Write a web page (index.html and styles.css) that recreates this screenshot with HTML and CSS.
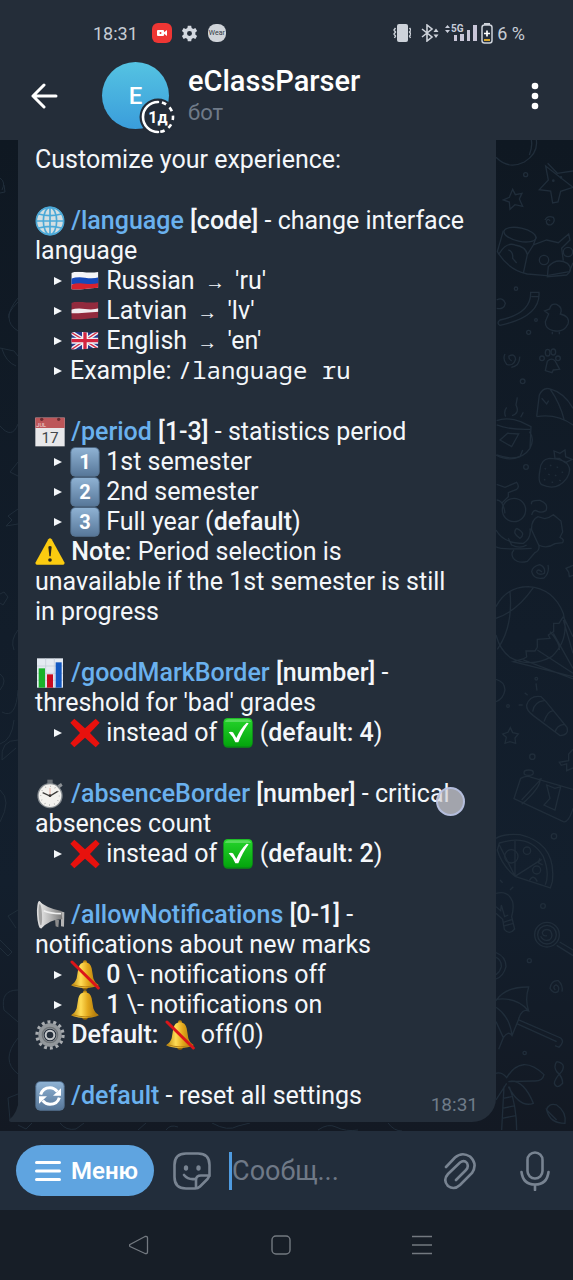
FILE: index.html
```html
<!DOCTYPE html>
<html lang="ru">
<head>
<meta charset="utf-8">
<meta name="viewport" content="width=device-width, initial-scale=1">
<title>eClassParser</title>
<link rel="stylesheet" href="styles.css">
</head>
<body>
<svg class="sprite" aria-hidden="true">
  <defs>
    <linearGradient id="gold" x1="0" x2="1"><stop offset="0" stop-color="#b98309"/><stop offset=".35" stop-color="#ffdc55"/><stop offset=".6" stop-color="#e3a81c"/><stop offset="1" stop-color="#a06c06"/></linearGradient>
    <linearGradient id="key" x1="0" y1="0" x2="0" y2="1"><stop offset="0" stop-color="#8fb2d3"/><stop offset="1" stop-color="#59799b"/></linearGradient>
    <linearGradient id="green" x1="0" y1="0" x2="0" y2="1"><stop offset="0" stop-color="#25d42b"/><stop offset="1" stop-color="#04a50d"/></linearGradient>
    <linearGradient id="steel" x1="0" x2="1"><stop offset="0" stop-color="#e9e9e9"/><stop offset=".5" stop-color="#b5b5b5"/><stop offset="1" stop-color="#777"/></linearGradient>
    <clipPath id="flag"><path d="M4 21Q16 15 38 18T85 18V65Q64 66 44 69T4 70Z"/></clipPath>
  </defs>
  <symbol id="globe" viewBox="0 0 90 90"><circle cx="45" cy="45" r="42" fill="#d4dfe2"/><g fill="none" stroke="#4ba9d8" stroke-width="5"><circle cx="45" cy="45" r="41"/><ellipse cx="45" cy="45" rx="20" ry="41"/><path d="M45 4V86M4 45H86M11 24Q45 34 79 24M11 66Q45 56 79 66"/></g></symbol>
  <symbol id="ru" viewBox="0 0 90 90"><g clip-path="url(#flag)"><path d="M0 10H90V80H0Z" fill="#f4f5f8"/><path d="M0 39Q20 31 45 35T90 33V55H0Z" fill="#1649b8"/><path d="M0 57Q20 50 45 53T90 50V80H0Z" fill="#d6222d"/></g></symbol>
  <symbol id="lv" viewBox="0 0 90 90"><g clip-path="url(#flag)"><path d="M0 10H90V80H0Z" fill="#922a3d"/><path d="M0 42Q20 35 45 39T90 36V47Q65 48 45 50T0 52Z" fill="#f1edf0"/></g></symbol>
  <symbol id="gb" viewBox="0 0 90 90"><g clip-path="url(#flag)"><path d="M0 10H90V80H0Z" fill="#28398c"/><path d="M2 18L87 70M87 15L2 72" stroke="#f0f1f6" stroke-width="12"/><path d="M2 18L87 70M87 15L2 72" stroke="#d42a42" stroke-width="4"/><path d="M45 12V76M0 44H90" stroke="#f0f1f6" stroke-width="18"/><path d="M45 12V76M0 44H90" stroke="#d42440" stroke-width="10"/></g></symbol>
  <symbol id="calendar" viewBox="0 0 90 90"><path d="M1 2H89V88H1Z" fill="#e8e8ea"/><path d="M1 2H89V33H1Z" fill="#bd5659"/><circle cx="20" cy="7" r="5" fill="#6b2c31"/><circle cx="71" cy="7" r="5" fill="#6b2c31"/></symbol>
  <symbol id="keycap" viewBox="0 0 90 90"><rect x="1" y="1" width="88" height="88" rx="15" fill="#587797"/><rect x="4" y="3" width="82" height="81" rx="13" fill="url(#key)"/></symbol>
  <symbol id="warning" viewBox="0 0 90 90"><path d="M40 7Q45 1 50 7L88 76Q90 83 84 83H6Q0 83 2 76Z" fill="#fbcb10"/><path d="M40 29Q45 25 50 29L47 58H43Z" fill="#292620"/><circle cx="45" cy="69" r="5.500" fill="#292620"/></symbol>
  <symbol id="chart" viewBox="0 0 90 90"><path d="M6 1H84V89H6Z" fill="#e4eaf2"/><path d="M6 24H84M6 46H84M6 67H84M32 1V89M58 1V89" stroke="#bfc9d6" stroke-width="2"/><path d="M11 31H30V89H11Z" fill="#19b22a"/><path d="M36 49H54V89H36Z" fill="#c80b20"/><path d="M62 13H80V89H62Z" fill="#1258c1"/></symbol>
  <symbol id="cross" viewBox="0 0 90 90"><path d="M13 2L45 31 77 2 89 14 60 45 89 76 77 88 45 59 13 88 1 76 30 45 1 14Z" fill="#e8110d"/></symbol>
  <symbol id="check" viewBox="0 0 90 90"><rect x="1" y="1" width="88" height="88" rx="13" fill="#088f14"/><rect x="2" y="1" width="86" height="83" rx="12" fill="url(#green)"/><path d="M6 12Q8 4 18 4H72Q82 4 84 12Z" fill="#79e57b" opacity=".6"/><path d="M17 43Q24 39 30 43L40 60Q52 32 71 14L77 16Q59 40 46 73H37Q29 54 17 43Z" fill="#fff"/></symbol>
  <symbol id="stopwatch" viewBox="0 0 90 90"><path d="M37 2H53V15H37Z" fill="#697077"/><path d="M68 19L78 12 83 20 73 28Z" fill="#8d9297"/><circle cx="45" cy="50" r="38" fill="#858b90"/><circle cx="45" cy="50" r="34" fill="#f3f2ef"/><circle cx="45" cy="50" r="28" fill="none" stroke="#9a9a98" stroke-width="4" stroke-dasharray="2 12.600"/><path d="M23 41L45 51 68 37" fill="none" stroke="#3b3a39" stroke-width="4"/><path d="M45 27V50" stroke="#d98a79" stroke-width="2"/><circle cx="45" cy="50" r="4" fill="#333"/></symbol>
  <symbol id="megaphone" viewBox="0 0 90 90"><path d="M60 57L62 79 70 82 72 61Z" fill="#8b8b8b"/><path d="M76 34L88 37 87 80 78 79V58Z" fill="#b5b5b5"/><path d="M13 4Q34 25 79 33L82 58Q47 57 18 86Z" fill="url(#steel)"/><ellipse cx="15" cy="44" rx="9" ry="41" fill="#dadada" transform="rotate(-3 15 44)"/><ellipse cx="16" cy="44" rx="5" ry="32" fill="#a2a2a2" transform="rotate(-3 16 44)"/><path d="M26 32Q45 40 78 41" fill="none" stroke="#efefef" stroke-width="5"/></symbol>
  <symbol id="bell" viewBox="0 0 90 90"><circle cx="45" cy="80" r="9" fill="#9b6908"/><circle cx="45" cy="7" r="6" fill="#c18a11"/><path d="M25 25Q29 7 45 7T65 25L70 55Q74 68 87 76 70 84 45 84T3 76Q16 68 20 55Z" fill="url(#gold)"/><path d="M8 74Q45 87 83 74" fill="none" stroke="#b98214" stroke-width="3"/></symbol>
  <symbol id="bell-off" viewBox="0 0 90 90"><use href="#bell"/><path d="M6 6L85 84" stroke="#dc1519" stroke-width="9" stroke-linecap="round"/></symbol>
  <symbol id="gear" viewBox="0 0 90 90"><circle cx="45" cy="45" r="39" fill="none" stroke="#a8acb0" stroke-width="10" stroke-dasharray="8.750 8.750"/><circle cx="45" cy="45" r="27" fill="none" stroke="#92979b" stroke-width="16"/><circle cx="45" cy="45" r="23" fill="none" stroke="#6f7478" stroke-width="4"/><circle cx="45" cy="45" r="13" fill="none" stroke="#c4c7ca" stroke-width="6"/></symbol>
  <symbol id="refresh" viewBox="0 0 90 90"><use href="#keycap"/><g fill="none" stroke="#fff" stroke-width="9"><path d="M17 41Q23 20 45 20 58 20 67 32M73 50Q67 70 45 70 32 70 23 59"/></g><path d="M78 22V44H54ZM12 68V46H36Z" fill="#fff"/></symbol>
</svg>

<div class="app">
  <header class="top">
    <div class="status">
      <div class="status-left">
        <span class="clock">18:31</span>
        <svg class="rec" viewBox="0 0 20 20"><rect width="20" height="20" rx="6" fill="#ee3634"/><rect x="5" y="7" width="7" height="6" rx="1" fill="#fff"/><path d="M11 10L15 7V13Z" fill="#fff"/><circle cx="8.500" cy="10" r="1" fill="#ee3634"/></svg>
        <svg class="cog" viewBox="0 0 24 24"><path fill="#d3d8e0" fill-rule="evenodd" d="M9.600 1H14.400L15 4.200A8 8 0 0 1 17.200 5.500L20.300 4.400 22.700 8.600 20.200 10.700A8 8 0 0 1 20.200 13.300L22.700 15.400 20.300 19.600 17.200 18.500A8 8 0 0 1 15 19.800L14.400 23H9.600L9 19.800A8 8 0 0 1 6.800 18.500L3.700 19.600 1.300 15.400 3.800 13.300A8 8 0 0 1 3.800 10.700L1.300 8.600 3.700 4.400 6.800 5.500A8 8 0 0 1 9 4.200ZM12 8.500A3.500 3.500 0 1 0 12 15.500 3.500 3.500 0 1 0 12 8.500Z"/></svg>
        <span class="wear">Wear</span>
      </div>
      <div class="status-right">
        <svg class="vibrate" viewBox="0 0 18 20"><rect x="4" y="1" width="11" height="18" rx="2" fill="#cdd2da"/><path d="M2.500 5L1 7 2.500 9 1 11 2.500 13 1.500 15M16.500 5L18 7 16.500 9 18 11 16.500 13 17.500 15" fill="none" stroke="#cdd2da" stroke-width="1.400"/></svg>
        <svg class="bluetooth" viewBox="0 0 18 18"><path d="M1 5L11 13 6 17V1L11 5 1 13" fill="none" stroke="#cdd2da" stroke-width="1.600"/><path d="M12.500 8L15 4.500 17.500 8ZM12.500 10.500H17.500L15 14Z" fill="#cdd2da"/></svg>
        <svg class="signal" viewBox="0 0 32 20"><path d="M0 5L2.500 2 5 5ZM0 7H5L2.500 10Z" fill="#c9cedb"/><text x="6" y="9" class="signal-label">5G</text><path d="M9 12H12V18H9ZM15 11H19V18H15ZM22 7H25V18H22ZM28 2H32V18H28Z" fill="#c9c6d8"/></svg>
        <svg class="battery" viewBox="0 0 12 22"><path d="M3 1H9V3H3Z" fill="#cdd2da"/><rect x="1" y="3" width="10" height="18" rx="2.500" fill="none" stroke="#cdd2da" stroke-width="1.500"/><path d="M6 8.500V14.500M3 11.500H9" stroke="#fff" stroke-width="1.700"/><path d="M3 17H9V19H3Z" fill="#d7a52c"/></svg>
        <span class="percent">6 %</span>
      </div>
    </div>
    <div class="chat-bar">
      <button class="icon-btn back" aria-label="Назад"><svg viewBox="0 0 28 26"><path d="M26 13H3M14 2L3 13 14 24" fill="none" stroke="#fff" stroke-width="3" stroke-linecap="round" stroke-linejoin="round"/></svg></button>
      <div class="avatar">E
        <svg class="timer" viewBox="0 0 38 38"><circle cx="19" cy="19" r="18.500" fill="#232c38"/><path d="M19 4A15 15 0 0 0 19 34" fill="none" stroke="#fff" stroke-width="2.600" stroke-linecap="round"/><path d="M19 4A15 15 0 0 1 19 34" fill="none" stroke="#fff" stroke-width="2.600" stroke-dasharray="0 4 4.500 4.500 4.500 4.500 4.500 4.500 4.500 4.500 4.500 9"/><text x="19" y="25" class="timer-label">1д</text></svg>
      </div>
      <div class="peer">
        <h1>eClassParser</h1>
        <p>бот</p>
      </div>
      <button class="icon-btn more" aria-label="Ещё"><svg viewBox="0 0 8 28"><g fill="#fff"><circle cx="4" cy="4" r="3.300"/><circle cx="4" cy="14" r="3.300"/><circle cx="4" cy="24" r="3.300"/></g></svg></button>
    </div>
  </header>

  <main class="chat">
    <svg class="doodles doodles-right" viewBox="0 0 77 991" aria-hidden="true">
      <g transform="translate(-56 -10) scale(.3333)">
        <path d="M168 82Q205 120 253 96 295 70 289 30M268 75Q278 50 274 30"/>
        <path d="M323 100L352 130 399 123M399 172L362 184 354 216 338 219 332 183 298 179 325 150 317 108Z"/><circle cx="340" cy="152" r="2"/><circle cx="363" cy="142" r="2"/><circle cx="257" cy="134" r="6"/>
        <path d="M218 178L226 194 246 190 238 207 248 229 225 224 210 238 208 216 190 210 208 202Z"/>
        <path d="M330 273Q324 263 319 274 320 287 334 284 348 274 340 262 322 255 315 270"/>
        <ellipse cx="240" cy="314" rx="49" ry="20" transform="rotate(12 240 314)"/>
        <path d="M190 302L172 365Q205 420 262 432L320 437 388 425 399 398M289 320L280 345 262 374 250 430M178 370Q200 335 225 345 258 350 262 374M205 360Q220 365 218 385L230 399M280 345L320 330 355 338 386 312 390 330 365 355 370 392"/><circle cx="312" cy="390" r="14"/><circle cx="384" cy="366" r="14"/><path d="M322 440L325 410Q350 382 382 400 402 420 380 435Z"/>
        <path d="M272 487H297Q302 560 180 586 168 580 180 570 274 550 272 487ZM274 500H296M170 510Q188 500 196 520 192 540 170 535"/><circle cx="228" cy="476" r="5"/><circle cx="266" cy="607" r="6"/><circle cx="288" cy="570" r="4"/>
        <path d="M326 552L314 543 329 537Q332 520 350 523 370 533 361 552 391 559 384 582 371 609 340 602 315 597 316 575 320 565 326 552ZM337 605V613M358 605V613"/>
        <path d="M215 693Q205 687 207 678 225 669 227 688 220 710 200 703 187 688 195 672M214 712Q240 708 239 680"/><circle cx="248" cy="754" r="7"/>
        <ellipse cx="323" cy="668" rx="7" ry="10"/><ellipse cx="340" cy="666" rx="7" ry="9"/><circle cx="306" cy="685" r="7"/><circle cx="354" cy="685" r="7"/><path d="M316 722L322 694Q334 682 345 692L359 718 340 720 336 728Z"/>
        <path d="M290 860L298 795Q310 770 330 777 372 788 399 835M290 860Q350 850 399 885M330 777Q360 820 373 871M305 805L320 822 326 812"/>
        <path d="M170 872Q200 860 242 875L273 890 270 955Q240 1000 170 975M170 885Q210 900 270 898M180 930L203 910 236 912 215 950ZM268 905Q285 925 270 955M197 860Q190 845 200 832M216 857Q240 850 228 825L232 802M242 862L250 847"/>
      </g>
      <g transform="translate(-56 310) scale(.3333)">
        <path d="M168 15Q205 35 240 20L248 0"/><circle cx="258" cy="51" r="7"/>
        <path d="M300 60Q302 28 328 25 350 25 375 35 400 55 380 85 350 125 305 104 293 95 300 60M345 25L342 3 360 10 375 0 377 20 397 28 376 38 358 25Z"/><path d="M314 55L318 58M330 45L334 48M350 50L354 53M365 65L369 68M345 75L349 78M325 72L329 75M312 88L316 91M335 95L339 98M358 90L362 93" />
        <path d="M170 103L195 112 230 97Q240 110 230 118L205 128V140L185 160M170 150Q190 150 195 190"/><circle cx="222" cy="180" r="35"/>
        <path d="M275 163Q270 150 300 151 326 160 318 182 305 190 293 184 280 176 275 195M275 240Q273 210 294 200L314 206Q330 202 340 194L363 213 368 246 360 262Q374 268 368 278L345 281Q320 298 296 285ZM296 285Q301 300 285 308L262 334Q235 342 220 325 211 310 222 300M168 240Q190 280 250 280 275 265 270 235M205 265L215 285Q240 298 260 285M230 235Q215 250 240 265 260 250 230 235M168 290Q180 300 275 295"/>
        <path d="M306 366Q292 354 290 366 295 377 313 370 318 352 299 344 277 350 275 365 281 390 312 384 329 370 324 345M399 346L390 350 378 355 386 366 388 380 399 376"/>
        <path d="M168 470Q200 410 265 410 340 415 370 490 390 570 335 620 270 655 210 622 180 600 168 555M210 425Q220 530 172 598M280 413Q230 485 168 505M370 500L357 520 341 520V545L325 555 330 565 292 568V592L285 603H258L260 621 249 627 220 635 399 680M330 545Q360 580 358 600M370 500L399 560M370 510L399 610M340 550L399 655M292 600L399 670M250 630L399 687"/>
        <path d="M168 688Q194 695 195 720 190 748 168 755M288 700L291 722M254 728L263 736M236 765H248"/><circle cx="289" cy="686" r="4"/><circle cx="204" cy="768" r="4"/>
        <path d="M260 765Q270 735 303 740L318 755 381 832Q388 855 360 857L280 797Q258 780 260 765ZM278 785Q282 755 313 752M312 815Q325 780 340 783M345 847Q350 825 373 823"/>
        <path d="M211 833L218 848 235 852 225 864 227 880 210 875 195 880 199 862 188 852 204 847ZM399 898L386 912 386 932 358 937 364 946 380 942V962L399 954"/><circle cx="277" cy="920" r="8"/>
      </g>
      <g transform="translate(-56 630) scale(.3333)">
        <path d="M242 25Q260 15 275 22L399 58M242 25L222 86 370 155Q385 160 399 115M245 90L305 25M300 25Q305 50 245 103M320 45L345 55 362 50 345 120 312 105 330 85Z"/><ellipse cx="266" cy="8" rx="14" ry="8"/><circle cx="342" cy="199" r="8"/><circle cx="309" cy="408" r="7"/><circle cx="268" cy="572" r="6"/><circle cx="254" cy="849" r="5"/>
        <path d="M168 205Q190 190 240 194 350 220 337 335L331 354 225 319Q185 285 172 240L178 219Q270 190 310 260 330 310 316 344M225 211V319M225 319L305 268M225 319L178 225"/><circle cx="214" cy="259" r="20"/><circle cx="261" cy="242" r="11"/><circle cx="290" cy="300" r="12"/><path d="M268 332Q280 310 292 335M300 265L295 278 308 285"/>
        <path d="M168 370Q205 360 218 395 222 415 215 440L224 477Q208 497 193 478L188 448 168 430M168 410L182 422 184 405 194 440 205 435M190 457L218 448M193 468L220 460M180 330L188 338M210 360L220 350"/>
        <circle cx="321" cy="494" r="37"/><circle cx="321" cy="494" r="28"/><path d="M321 497Q307 500 307 487 315 473 331 482 342 500 328 510 310 515 302 499M359 516L399 540M350 526L399 557"/>
        <path d="M168 548Q198 560 198 590 190 620 168 627M168 562Q185 570 184 590 180 606 168 614"/>
        <path d="M346 660Q336 650 348 645 361 650 354 665 340 673 330 655 334 630 355 632 370 645 366 665"/>
        <path d="M168 692Q195 650 266 651 254 690 266 723 245 714 235 750L216 797Q205 780 190 803L176 838M168 688Q230 680 266 723M168 712Q210 740 216 797M168 755L190 803M236 750L362 804Q375 815 357 832L345 827M232 762L350 815"/>
        <path d="M168 910Q185 905 200 923 245 850 312 914 308 935 280 933L205 935M205 935Q250 925 280 1000 240 1015 205 950M200 940L168 990M192 950L185 1080M208 950Q230 1010 230 1080M189 985L215 980M187 1015L222 1008M186 1045L228 1037"/><path d="M350 875Q380 880 365 905 345 925 343 940 350 960 368 940 368 920 350 905 340 890 350 875M320 1020Q325 998 350 1005 380 1025 375 1060 330 1060 320 1020L350 1050"/>
      </g>
    </svg>
    <svg class="doodles doodles-left" viewBox="0 0 18 991" aria-hidden="true">
      <path d="M0 38Q6 42 2 50M0 53L5 52 4 45M18 158Q0 180 18 191M18 162Q6 174 9 178M0 208L14 211 18 216M2 209Q6 222 16 226M0 286Q12 300 18 284M18 322L10 332 18 336M18 369L8 376 12 380 6 386 18 384M0 454L4 452 8 457 3 465 0 463M18 490Q10 500 14 510M0 534Q8 540 0 550M2 572Q16 580 18 550M14 580Q12 600 0 604M18 600Q0 600 2 620L16 608M0 650Q12 660 0 682M18 770L8 776 16 788M0 800L12 812 8 816 0 808M18 850Q0 850 4 870L18 882M18 898Q0 920 18 934M18 954L8 958 10 980"/>
    </svg>
    <svg class="doodles doodles-bottom" viewBox="0 0 478 8" aria-hidden="true"><path d="M0 2L8 6 14 0M42 0Q48 8 58 6L66 0M120 7L128 0M148 7Q152 1 160 4M194 0Q210 9 220 3L232 0M300 7Q310 0 318 4 328 9 340 7M370 0Q376 8 384 8"/></svg>

    <article class="bubble">
      <p>Customize your experience:</p>

      <section>
        <p><svg class="emoji"><use href="#globe"/></svg> <a href="#">/language</a> <b>[code]</b> - change interface language</p>
        <ul>
          <li><svg class="emoji"><use href="#ru"/></svg> Russian <span class="arrow">→</span> 'ru'</li>
          <li><svg class="emoji"><use href="#lv"/></svg> Latvian <span class="arrow">→</span> 'lv'</li>
          <li><svg class="emoji"><use href="#gb"/></svg> English <span class="arrow">→</span> 'en'</li>
          <li>Example: <code>/language ru</code></li>
        </ul>
      </section>

      <section>
        <p><svg class="emoji" viewBox="0 0 90 90"><use href="#calendar"/><text x="4" y="30" class="cal-month">JUL</text><text x="45" y="78" class="cal-day">17</text></svg> <a href="#">/period</a> <b>[1-3]</b> - statistics period</p>
        <ul>
          <li><svg class="emoji" viewBox="0 0 90 90"><use href="#keycap"/><text x="45" y="66" class="key-digit">1</text></svg> 1st semester</li>
          <li><svg class="emoji" viewBox="0 0 90 90"><use href="#keycap"/><text x="45" y="66" class="key-digit">2</text></svg> 2nd semester</li>
          <li><svg class="emoji" viewBox="0 0 90 90"><use href="#keycap"/><text x="45" y="66" class="key-digit">3</text></svg> Full year (<b>default</b>)</li>
        </ul>
        <p><svg class="emoji"><use href="#warning"/></svg> <b>Note:</b> Period selection is<br>unavailable if the 1st semester is still<br>in progress</p>
      </section>

      <section>
        <p><svg class="emoji"><use href="#chart"/></svg> <a href="#">/goodMarkBorder</a> <b>[number]</b> -<br>threshold for 'bad' grades</p>
        <ul>
          <li><svg class="emoji"><use href="#cross"/></svg> instead of <svg class="emoji"><use href="#check"/></svg> (<b>default: 4</b>)</li>
        </ul>
      </section>

      <section>
        <p><svg class="emoji"><use href="#stopwatch"/></svg> <a href="#">/absenceBorder</a> <b>[number]</b> - <span class="touched">critical<span class="touch"></span></span> absences count</p>
        <ul>
          <li><svg class="emoji"><use href="#cross"/></svg> instead of <svg class="emoji"><use href="#check"/></svg> (<b>default: 2</b>)</li>
        </ul>
      </section>

      <section>
        <p><svg class="emoji"><use href="#megaphone"/></svg> <a href="#">/allowNotifications</a> <b>[0-1]</b> -<br>notifications about new marks</p>
        <ul>
          <li><svg class="emoji"><use href="#bell-off"/></svg> <b>0</b> \- notifications off</li>
          <li><svg class="emoji"><use href="#bell"/></svg> <b>1</b> \- notifications on</li>
        </ul>
        <p><svg class="emoji"><use href="#gear"/></svg> <b>Default:</b> <svg class="emoji"><use href="#bell-off"/></svg> off(0)</p>
      </section>

      <div class="last">
        <p><svg class="emoji"><use href="#refresh"/></svg> <a href="#">/default</a> - reset all settings</p>
        <time>18:31</time>
      </div>
      <svg class="tail" viewBox="0 0 10 24" aria-hidden="true"><path d="M10 0Q9 15 0 22 0 24 2 24H10Z" fill="#242e3a"/></svg>
    </article>
  </main>

  <form class="composer">
    <button type="button" class="menu"><svg viewBox="0 0 26 20"><path d="M1.500 1.500H24.500M1.500 10H24.500M1.500 18.500H24.500" stroke="#fff" stroke-width="3" stroke-linecap="round"/></svg>Меню</button>
    <button type="button" class="icon-btn sticker" aria-label="Стикеры"><svg viewBox="0 0 38 38"><g fill="none" stroke="#788391" stroke-width="2.600" stroke-linecap="round" stroke-linejoin="round"><path d="M36.500 24V13Q36.500 1.500 25 1.500H13Q1.500 1.500 1.500 13V25Q1.500 36.500 13 36.500H22Q25 36.500 27 34.500L34.500 27Q36.500 25 36.500 22M23 36V28Q23 23.500 28 23.500H36"/><path d="M11 23Q15 28 22 27"/></g><ellipse cx="13" cy="16" rx="2.200" ry="2.800" fill="#788391"/><ellipse cx="25.500" cy="16" rx="2.200" ry="2.800" fill="#788391"/></svg></button>
    <input type="text" placeholder="Сообщ..." aria-label="Сообщение">
    <button type="button" class="icon-btn clip" aria-label="Прикрепить"><svg viewBox="0 0 34 38"><path d="M3 15L12 5.500Q19-.5 27 4.500 35 12 29 21L17 33Q11 38.500 5 34-.5 28 5 22L17 10.500Q21 7.500 24 11 26 15 23 18L13 28" fill="none" stroke="#788391" stroke-width="2.600" stroke-linecap="round"/></svg></button>
    <button type="button" class="icon-btn mic" aria-label="Голосовое сообщение"><svg viewBox="0 0 30 40"><g fill="none" stroke="#788391" stroke-width="2.600" stroke-linecap="round"><rect x="7.500" y="1.500" width="15" height="26" rx="7.500"/><path d="M1.500 21Q3 33.500 15 33.500T28.500 21M15 34V39"/></g></svg></button>
  </form>

  <nav class="system">
    <button class="icon-btn" aria-label="Назад"><svg viewBox="0 0 20 20"><path d="M1 9.500Q0 10.500 1 11.500L16 18.500Q18.500 19 18.500 17V3Q18.500 1 16 1.500Z" fill="none" stroke="#737980" stroke-width="1.300"/></svg></button>
    <button class="icon-btn" aria-label="Домой"><svg viewBox="0 0 20 20"><rect x="1" y="1" width="18" height="18" rx="4" fill="none" stroke="#737980" stroke-width="1.400"/></svg></button>
    <button class="icon-btn" aria-label="Недавние"><svg viewBox="0 0 20 20"><path d="M0 1.500H20M0 10H20M0 18.500H20" stroke="#737980" stroke-width="1.500"/></svg></button>
  </nav>
</div>
</body>
</html>
```

FILE: styles.css
```css
* { box-sizing: border-box; }
body {
  margin: 0;
  background: #171e27;
  color: #f4f7fa;
  font-family: Roboto, "Noto Sans", sans-serif;
}
p, h1, ul { margin: 0; padding: 0; }
svg { display: block; }
button { font: inherit; color: inherit; border: 0; padding: 0; background: none; }
b { font-weight: 500; }

.sprite { position: absolute; width: 0; height: 0; }
.app { display: flex; flex-direction: column; min-height: 100vh; }

/* Header */
.top { height: 140px; background: #242d39; position: relative; }
.status {
  display: flex;
  justify-content: space-between;
  align-items: center;
  height: 52px;
  padding: 14px 48px 0 93px;
  font-size: 18px;
  color: #c6ccd5;
}
.status-left, .status-right { display: flex; align-items: center; }
.rec { width: 20px; height: 20px; margin-left: 14px; }
.cog { width: 17px; height: 17px; margin-left: 9px; }
.wear {
  width: 18px;
  height: 18px;
  margin-left: 10px;
  border-radius: 8px;
  background: #d0d4da;
  color: #333a44;
  font-size: 7px;
  line-height: 18px;
  text-align: center;
}
.status-right { gap: 4px; }
.vibrate { width: 18px; height: 20px; margin-right: 6px; }
.bluetooth { width: 18px; height: 18px; margin-right: 2px; }
.signal { width: 32px; height: 20px; }
.signal-label { font: 700 10px Roboto, sans-serif; fill: #c9cedb; }
.battery { width: 12px; height: 22px; }

.chat-bar { display: flex; align-items: center; padding: 10px 34px 0 30px; }
.back svg { width: 28px; height: 26px; }
.avatar {
  position: relative;
  width: 67px;
  height: 67px;
  margin-left: 44px;
  border-radius: 50%;
  background: linear-gradient(#55c3e2, #3a9ddb);
  color: #fff;
  font-size: 24px;
  font-weight: 500;
  line-height: 68px;
  text-align: center;
}
.timer { position: absolute; right: -8px; bottom: -7px; width: 38px; height: 38px; }
.timer-label { font: 700 16px Roboto, sans-serif; fill: #fff; text-anchor: middle; }
.peer { flex: 1; margin-left: 19px; }
.peer h1 { color: #fff; font-size: 29px; font-weight: 500; line-height: 34px; }
.peer p { color: #6f7a88; font-size: 22px; line-height: 30px; }
.more svg { width: 8px; height: 28px; }

/* Conversation */
.chat {
  flex: 1;
  position: relative;
  padding: 0 77px 8px 18px;
  background: linear-gradient(#0f1822, #121d2a 50%, #131f2d 75%, #131923);
}
.doodles {
  position: absolute;
  fill: none;
  stroke: #202d3a;
  stroke-width: 4;
}
.doodles-right { top: 0; right: 0; width: 77px; height: 991px; }
.doodles-left { top: 0; left: 0; width: 18px; height: 991px; stroke-width: 1; }
.doodles-bottom { left: 18px; bottom: 0; width: 478px; height: 8px; stroke-width: 1; }

.bubble {
  position: relative;
  display: flex;
  flex-direction: column;
  gap: 31px;
  padding: 5px 18px 7px 17px;
  border-radius: 0 0 24px 0;
  background: #242e3a;
  font-size: 25px;
  line-height: 30px;
}
.bubble a { color: #6ab1ee; font-weight: 500; text-decoration: none; }
.bubble ul { list-style: none; }
.bubble li { padding-left: 19px; }
.bubble li::before {
  content: "";
  display: inline-block;
  margin-right: 8px;
  vertical-align: 4px;
  border: solid transparent;
  border-width: 4px 0 4px 8px;
  border-left-color: #f4f7fa;
}
.bubble code { font-family: "Noto Sans Mono", "DejaVu Sans Mono", monospace; font-size: 24px; line-height: 20px; }
.emoji { display: inline-block; width: 30px; height: 30px; vertical-align: top; }
.arrow { padding: 0 4px; font-size: 20px; line-height: 20px; }
.cal-month { font: 17px Roboto, sans-serif; fill: #f3dcdc; }
.cal-day { font: 46px Roboto, sans-serif; fill: #44474c; text-anchor: middle; }
.key-digit { font: 700 60px Roboto, sans-serif; fill: #fff; text-anchor: middle; }
.touched { position: relative; }
.touch {
  position: absolute;
  right: -15px;
  top: 8px;
  width: 29px;
  height: 29px;
  border: 2px solid rgba(185, 196, 232, .8);
  border-radius: 50%;
  background: rgba(210, 210, 216, .72);
}
.last { display: flex; justify-content: space-between; }
.last time { margin-top: 14px; color: #6f7b88; font-size: 19px; line-height: 20px; }
.tail { position: absolute; left: -9px; bottom: 0; width: 10px; height: 24px; }

/* Message input */
.composer {
  display: flex;
  align-items: center;
  height: 79px;
  padding: 0 23px 0 16px;
  background: #222d3b;
}
.menu {
  display: flex;
  align-items: center;
  gap: 10px;
  height: 51px;
  padding: 0 16px 0 19px;
  border-radius: 26px;
  background: #5fa4e0;
  color: #fff;
  font-size: 24px;
  font-weight: 600;
}
.menu svg { width: 26px; height: 20px; }
.sticker { margin-left: 19px; }
.sticker svg { width: 38px; height: 38px; }
.composer input {
  flex: 1;
  min-width: 0;
  height: 38px;
  margin-left: 18px;
  padding: 0;
  border: 0;
  border-left: 3px solid #4f9be0;
  outline: 0;
  background: none;
  color: #f4f7fa;
  font: 27px/38px Roboto, sans-serif;
}
.composer input::placeholder { color: #6f7987; opacity: 1; }
.clip svg { width: 34px; height: 38px; }
.mic { margin-left: 43px; }
.mic svg { width: 30px; height: 40px; }

/* System navigation */
.system {
  display: flex;
  justify-content: space-between;
  align-items: center;
  height: 70px;
  padding: 0 141px 0 129px;
  background: #171e27;
}
.system svg { width: 20px; height: 20px; }
```
